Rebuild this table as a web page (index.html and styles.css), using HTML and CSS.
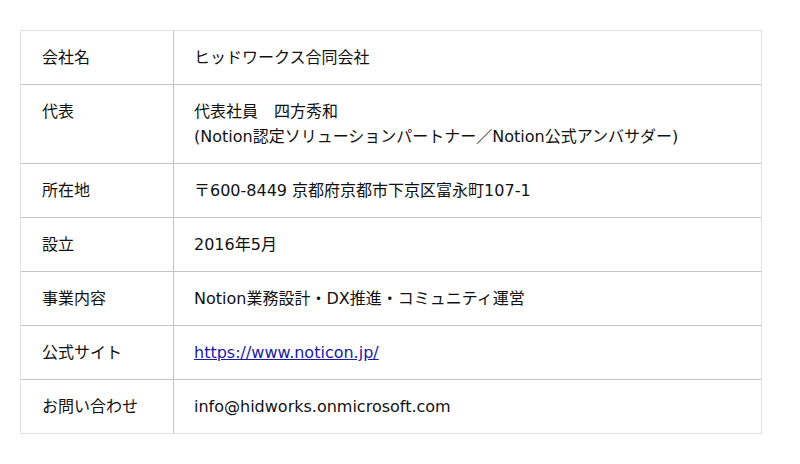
FILE: index.html
```html
<!DOCTYPE html>
<html lang="ja">
<head>
<meta charset="utf-8">
<link rel="stylesheet" href="styles.css">
</head>
<body>
<div class="wrap">
<table class="info">
<tbody>
<tr><th>会社名</th><td>ヒッドワークス合同会社</td></tr>
<tr><th>代表</th><td>代表社員　四方秀和<br>(Notion認定ソリューションパートナー／Notion公式アンバサダー)</td></tr>
<tr><th>所在地</th><td>〒600-8449 京都府京都市下京区富永町107-1</td></tr>
<tr><th>設立</th><td>2016年5月</td></tr>
<tr><th>事業内容</th><td>Notion業務設計・DX推進・コミュニティ運営</td></tr>
<tr><th>公式サイト</th><td><a href="#">https://www.noticon.jp/</a></td></tr>
<tr><th>お問い合わせ</th><td>info@hidworks.onmicrosoft.com</td></tr>
</tbody>
</table>
</div>
</body>
</html>
```
FILE: styles.css
```css
html, body {
  margin: 0;
  padding: 0;
  background: #ffffff;
}
body {
  font-family: "DejaVu Sans", "Noto Sans CJK JP", sans-serif;
  font-size: 16px;
  line-height: 25px;
  color: #111111;
}
.wrap {
  padding: 30px 38px 0 20px;
}
.info {
  width: 742px;
  border-collapse: separate;
  border-spacing: 0;
  border: 1px solid #e0e0e0;
}
.info th,
.info td {
  text-align: left;
  vertical-align: top;
  font-weight: normal;
  padding: 14px 20px 14px 20px;
  border-bottom: 1px solid #c4c4c4;
}
.info tr:last-child th,
.info tr:last-child td {
  border-bottom: none;
}
.info th {
  width: 111px;
  padding-left: 21px;
  border-right: 1px solid #c4c4c4;
}
.info a {
  color: #1a1aa6;
  text-decoration: underline;
}
```
